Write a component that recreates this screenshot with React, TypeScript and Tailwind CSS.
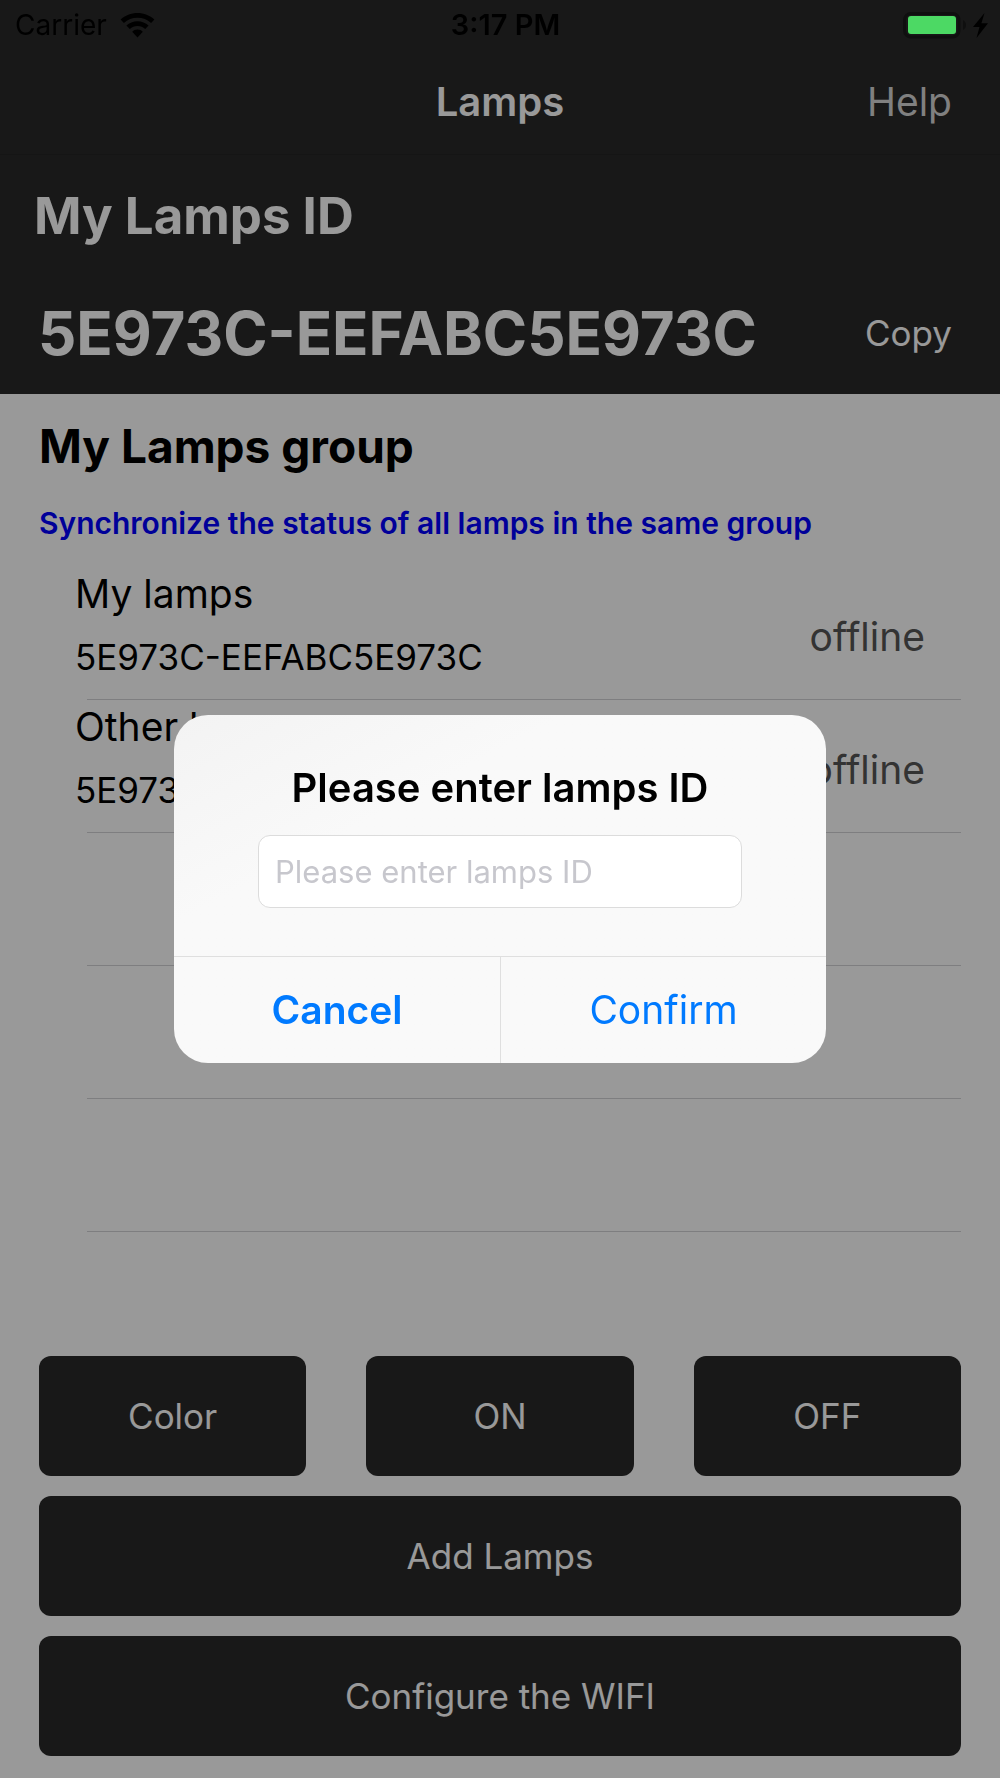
import React, { useState } from 'react';

interface Lamp {
  name: string;
  id: string;
  status: string;
}

const MY_ID = '5E973C-EEFABC5E973C';

const lamps: (Lamp | null)[] = [
  { name: 'My lamps', id: MY_ID, status: 'offline' },
  { name: 'Other lamps', id: MY_ID, status: 'offline' },
  null,
  null,
  null,
];

const WifiIcon = () => (
  <svg width="35" height="25" viewBox="0 0 35 25" aria-hidden="true">
    <path d="M0.6 6.6C5.2 2.4 11 0 17.5 0s12.3 2.4 16.9 6.6l-3.3 3.5C27.4 6.6 22.7 4.8 17.5 4.8S7.6 6.6 3.9 10.1z" />
    <path d="M6.4 12.6C9.4 9.9 13.2 8.3 17.5 8.3s8.1 1.6 11.1 4.3l-3.4 3.5c-2.1-1.9-4.7-3-7.7-3s-5.6 1.1-7.7 3z" />
    <path d="M12.2 18.8c1.4-1.3 3.2-2.2 5.3-2.2s3.9.9 5.3 2.2L17.5 24.4z" />
  </svg>
);

const BatteryIcon = () => (
  <svg width="85" height="27" viewBox="0 0 85 27" aria-hidden="true">
    <rect x="1.5" y="1.5" width="54.500" height="23.500" rx="6.500" fill="none" stroke="#0f0f0f" strokeWidth="3" />
    <rect x="5" y="4" width="48" height="18" rx="3" fill="#4cd964" />
    <path d="M60 8c4 2 4 8 0 10z" fill="#0f0f0f" />
    <path d="M81.500 1L70 15h6.500L73.500 26L85 11.300h-6.600z" />
  </svg>
);

const StatusBar = () => (
  <div className="relative z-20 grid h-[50px] grid-cols-[1fr_auto_1fr] items-center pl-[15px] pr-1 text-[28px] text-black">
    <div className="flex items-center gap-[13px]">
      <span>Carrier</span>
      <WifiIcon />
    </div>
    <span className="text-[29px] font-semibold">3:17 PM</span>
    <div className="mr-2 flex justify-end">
      <BatteryIcon />
    </div>
  </div>
);

const LampRow: React.FC<{ lamp: Lamp | null }> = ({ lamp }) => (
  <li>
    <div className="flex h-[132px] justify-between px-[36px]">
      {lamp && (
        <>
          <div>
            <div className="text-[39px] leading-[54px]">{lamp.name}</div>
            <div className="text-[35px] leading-[72px]">{lamp.id}</div>
          </div>
          <div className="self-center pt-2 text-[39px] text-[#555555]">{lamp.status}</div>
        </>
      )}
    </div>
    <div className="ml-12 h-px bg-[#d2d2d5]" />
  </li>
);

const ActionButton: React.FC<{ label: string }> = ({ label }) => (
  <button type="button" className="h-[120px] w-full rounded-xl bg-[#292929] text-[35px] text-white">
    {label}
  </button>
);

const EnterIdDialog: React.FC<{ onClose: () => void }> = ({ onClose }) => {
  const [value, setValue] = useState('');

  return (
    <div className="fixed inset-0 z-10 flex items-center justify-center bg-black/40">
      <div
        role="dialog"
        aria-modal="true"
        className="w-[652px] overflow-hidden rounded-[34px] bg-gradient-to-br from-[#f3f3f3] via-[#f9f9f9] via-30% to-[#f9f9f9]"
      >
        <div className="px-[84px] pb-12 pt-[46px]">
          <label htmlFor="lamps-id" className="block text-center text-[40px] font-semibold leading-[54px] text-black">
            Please enter lamps ID
          </label>
          <input
            id="lamps-id"
            type="text"
            value={value}
            onChange={(e) => setValue(e.target.value)}
            placeholder="Please enter lamps ID"
            className="mt-5 block h-[73px] w-full rounded-xl border border-[#dcdcdc] bg-white px-4 text-[31px] text-black outline-none placeholder:text-[#c7c7cd]"
          />
        </div>
        <div className="grid grid-cols-2 border-t border-[#dfdfdf] text-[39px] leading-[106px] text-[#007aff]">
          <button type="button" className="font-semibold" onClick={onClose}>
            Cancel
          </button>
          <button type="button" className="border-l border-[#dfdfdf]" onClick={onClose}>
            Confirm
          </button>
        </div>
      </div>
    </div>
  );
};

export default function App() {
  const [dialogOpen, setDialogOpen] = useState(true);

  return (
    <div className="flex min-h-screen flex-col bg-white font-['Inter',sans-serif] text-black [font-variant-ligatures:no-common-ligatures]">
      <header className="bg-[#292929] text-white">
        <StatusBar />
        <nav className="grid h-[105px] grid-cols-3 items-center border-b border-[#242424] px-12">
          <h1 className="col-start-2 text-center text-[40px] font-semibold">Lamps</h1>
          <button type="button" className="justify-self-end text-[39px] text-[#d5d5d5]">
            Help
          </button>
        </nav>
        <h2 className="pl-[34px] text-[51px] font-bold leading-[122px]">My Lamps ID</h2>
        <div className="flex items-center justify-between pb-[5px] pl-[38px] pr-12">
          <span className="text-[60px] font-bold leading-[112px]">{MY_ID}</span>
          <button type="button" className="text-[35px]">
            Copy
          </button>
        </div>
      </header>

      <main className="flex flex-1 flex-col px-[39px] pb-[22px]">
        <h2 className="text-[46px] font-bold leading-[104px]">My Lamps group</h2>
        <p className="pb-[19px] text-[30px] font-semibold leading-[50px] text-[#0000ff]">
          Synchronize the status of all lamps in the same group
        </p>
        <ul>
          {lamps.map((lamp, i) => (
            <LampRow key={i} lamp={lamp} />
          ))}
        </ul>

        <div className="mt-auto grid gap-5 pt-10">
          <div className="grid grid-cols-3 gap-[60px]">
            <ActionButton label="Color" />
            <ActionButton label="ON" />
            <ActionButton label="OFF" />
          </div>
          <ActionButton label="Add Lamps" />
          <ActionButton label="Configure the WIFI" />
        </div>
      </main>

      {dialogOpen && <EnterIdDialog onClose={() => setDialogOpen(false)} />}
    </div>
  );
}
